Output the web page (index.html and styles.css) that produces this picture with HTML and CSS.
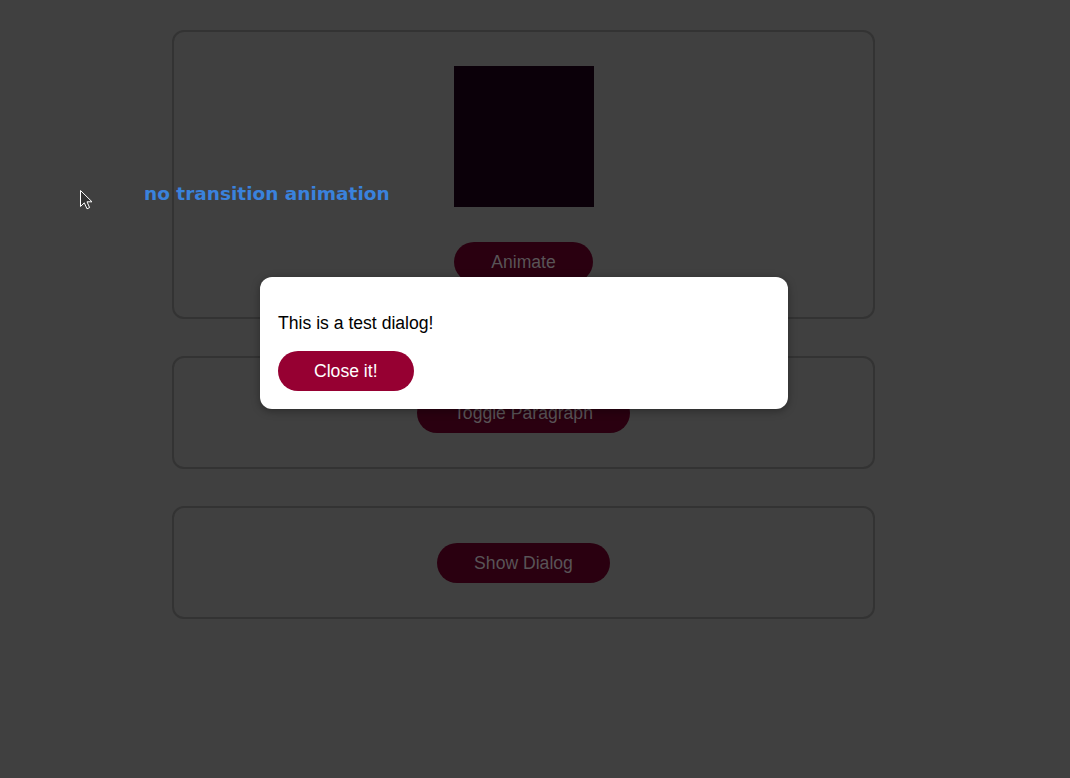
FILE: index.html
```html
<!DOCTYPE html>
<html lang="en">
<head>
<meta charset="utf-8">
<title>Dialog demo</title>
<link rel="stylesheet" href="styles.css">
</head>
<body>
<main class="page">
  <section class="card">
    <div class="box"></div>
    <button class="btn btn-dim">Animate</button>
  </section>
  <section class="card">
    <button class="btn btn-dim">Toggle Paragraph</button>
  </section>
  <section class="card">
    <button class="btn btn-dim">Show Dialog</button>
  </section>
</main>

<div class="dialog">
  <p class="dialog-text">This is a test dialog!</p>
  <button class="btn btn-primary">Close it!</button>
</div>

<div class="label">no transition animation</div>

<svg class="cursor" width="13" height="20" viewBox="0 0 13 20">
  <path d="M0.5 0.5 L0.5 16.5 L4.3 12.8 L7 18.8 L9.6 17.6 L7 11.8 L12 11.8 Z" fill="#333333" stroke="#ffffff" stroke-width="1" stroke-linejoin="round"/>
</svg>
</body>
</html>
```

FILE: styles.css
```css
html, body {
  margin: 0;
  padding: 0;
  background: #404040;
  height: 100%;
}

body {
  font-family: "Liberation Sans", Arial, sans-serif;
  overflow: hidden;
}

.page {
  display: flex;
  flex-direction: column;
  gap: 37px;
  width: 703px;
  padding: 30px 0 0 172px;
}

.card {
  box-sizing: border-box;
  border: 2px solid #333333;
  border-radius: 12px;
  padding: 35px 0 34px;
  display: flex;
  flex-direction: column;
  align-items: center;
  gap: 35px;
}

.card:first-child {
  padding-top: 34px;
  padding-bottom: 35px;
}

.box {
  width: 140px;
  height: 141px;
  background: #0b0009;
}

.btn {
  font-family: "Liberation Sans", Arial, sans-serif;
  font-size: 17.6px;
  line-height: 20px;
  height: 40px;
  padding: 10px 36px;
  border: none;
  border-radius: 20px;
  cursor: pointer;
}

.btn-dim {
  background: #2a0010;
  color: #595457;
  padding: 10px 37px;
}

.btn-primary {
  background: #960032;
  color: #ffffff;
}

.dialog {
  position: absolute;
  left: 260px;
  top: 277px;
  width: 528px;
  height: 132px;
  box-sizing: border-box;
  padding: 18px;
  background: #ffffff;
  border-radius: 12px;
  box-shadow: 0 2px 8px rgba(0, 0, 0, 0.35);
}

.dialog-text {
  margin: 18px 0 18px;
  font-size: 17.6px;
  line-height: 20px;
  color: #000000;
}

.label {
  position: absolute;
  left: 144px;
  top: 182px;
  font-family: "DejaVu Sans", Verdana, sans-serif;
  font-weight: bold;
  font-size: 18.5px;
  line-height: 23px;
  color: #3a82dc;
  white-space: nowrap;
}

.cursor {
  position: absolute;
  left: 80px;
  top: 190px;
}
```
